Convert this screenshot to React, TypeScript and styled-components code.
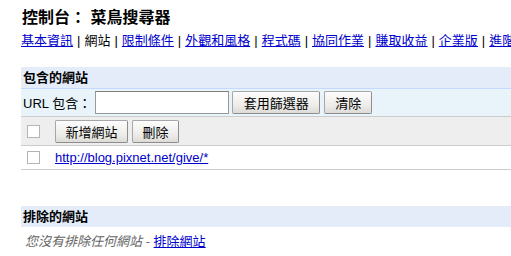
import React from "react";
import styled, { createGlobalStyle } from "styled-components";

const GlobalStyle = createGlobalStyle`
  html, body {
    margin: 0;
    padding: 0;
    background: #fff;
  }
  body {
    font-family: "Liberation Sans", "Noto Sans CJK TC", sans-serif;
    font-size: 13px;
    color: #000;
  }
`;

const navItems = [
  { label: "基本資訊", link: true },
  { label: "網站", link: false },
  { label: "限制條件", link: true },
  { label: "外觀和風格", link: true },
  { label: "程式碼", link: true },
  { label: "協同作業", link: true },
  { label: "賺取收益", link: true },
  { label: "企業版", link: true },
  { label: "進階", link: true },
];

const App = () => {
  return (
    <Page>
      <GlobalStyle />
      <Title>控制台： 菜鳥搜尋器</Title>
      <Nav>
        {navItems.map((item, i) => (
          <React.Fragment key={item.label}>
            {i > 0 && <Sep>|</Sep>}
            {item.link ? <A href="#">{item.label}</A> : <span>{item.label}</span>}
          </React.Fragment>
        ))}
      </Nav>

      {/* included sites */}
      <Section>
        <SectionHead $bordered>包含的網站</SectionHead>
        <FilterRow>
          <span>URL 包含：</span>
          <TextInput type="text" />
          <Button $w={88}>套用篩選器</Button>
          <Button $w={48}>清除</Button>
        </FilterRow>
        <Toolbar>
          <Check type="checkbox" />
          <Button $w={73}>新增網站</Button>
          <Button $w={47}>刪除</Button>
        </Toolbar>
        <SiteRow>
          <Check type="checkbox" />
          <A href="#">http://blog.pixnet.net/give/*</A>
        </SiteRow>
      </Section>

      {/* excluded sites */}
      <Section $top={36}>
        <SectionHead>排除的網站</SectionHead>
        <EmptyNote>
          <em>您沒有排除任何網站 -</em> <A href="#">排除網站</A>
        </EmptyNote>
      </Section>
    </Page>
  );
};

const Page = styled.div`
  padding: 8px 0 0 21px;
  width: 560px;
  overflow: hidden;
`;

const Title = styled.h1`
  margin: 0 0 0 1px;
  font-size: 16px;
  line-height: 20px;
  font-weight: bold;
`;

const Nav = styled.div`
  margin-top: 4px;
  line-height: 17px;
  white-space: nowrap;
`;

const Sep = styled.span`
  margin: 0 4px;
`;

const A = styled.a`
  color: #0000cc;
  text-decoration: underline;
`;

const Section = styled.div<{ $top?: number }>`
  margin-top: ${(p) => p.$top ?? 18}px;
`;

const SectionHead = styled.div<{ $bordered?: boolean }>`
  background: #e5ecf9;
  height: 21px;
  line-height: 21px;
  padding-left: 2px;
  font-weight: bold;
  border-bottom: ${(p) => (p.$bordered ? "1px solid #c3d9ff" : "none")};
`;

const FilterRow = styled.div`
  display: flex;
  align-items: center;
  height: 27px;
  padding-left: 2px;
  background: #e8f4fa;
  border-bottom: 1px solid #cccccc;
  white-space: nowrap;
`;

const TextInput = styled.input`
  box-sizing: border-box;
  width: 134px;
  height: 23px;
  margin: 0 3px 0 4px;
  border: 1px solid #999;
  border-top-color: #7f7f7f;
  background: #fff;
  padding: 0 3px;
`;

const Button = styled.button<{ $w: number }>`
  box-sizing: border-box;
  width: ${(p) => p.$w}px;
  height: 23px;
  margin-right: 4px;
  padding: 0;
  font-family: "Liberation Sans", "Noto Sans CJK TC", sans-serif;
  font-size: 13px;
  color: #000;
  border: 1px solid #a7a6aa;
  border-right-color: #8d8c90;
  border-bottom-color: #8d8c90;
  border-radius: 2px;
  background: linear-gradient(#fdfdfd, #ebeae6 70%, #dcdbd6);
`;

const Toolbar = styled.div`
  display: flex;
  align-items: center;
  height: 28px;
  padding-left: 6px;
  background: #eeeeee;
  border-bottom: 1px solid #cccccc;
  & > input {
    margin-right: 15px;
  }
`;

const Check = styled.input`
  appearance: none;
  box-sizing: border-box;
  width: 13px;
  height: 13px;
  margin: 0 16px 0 0;
  border: 1px solid #b4b4b4;
  background: #fff;
`;

const SiteRow = styled.div`
  display: flex;
  align-items: center;
  height: 23px;
  padding-left: 6px;
  border-bottom: 1px solid #cccccc;
  & > input {
    margin-right: 15px;
  }
`;

const EmptyNote = styled.div`
  padding: 6px 0 0 4px;
  line-height: 17px;
  color: #666;
  em {
    font-style: italic;
  }
`;

export default App;
